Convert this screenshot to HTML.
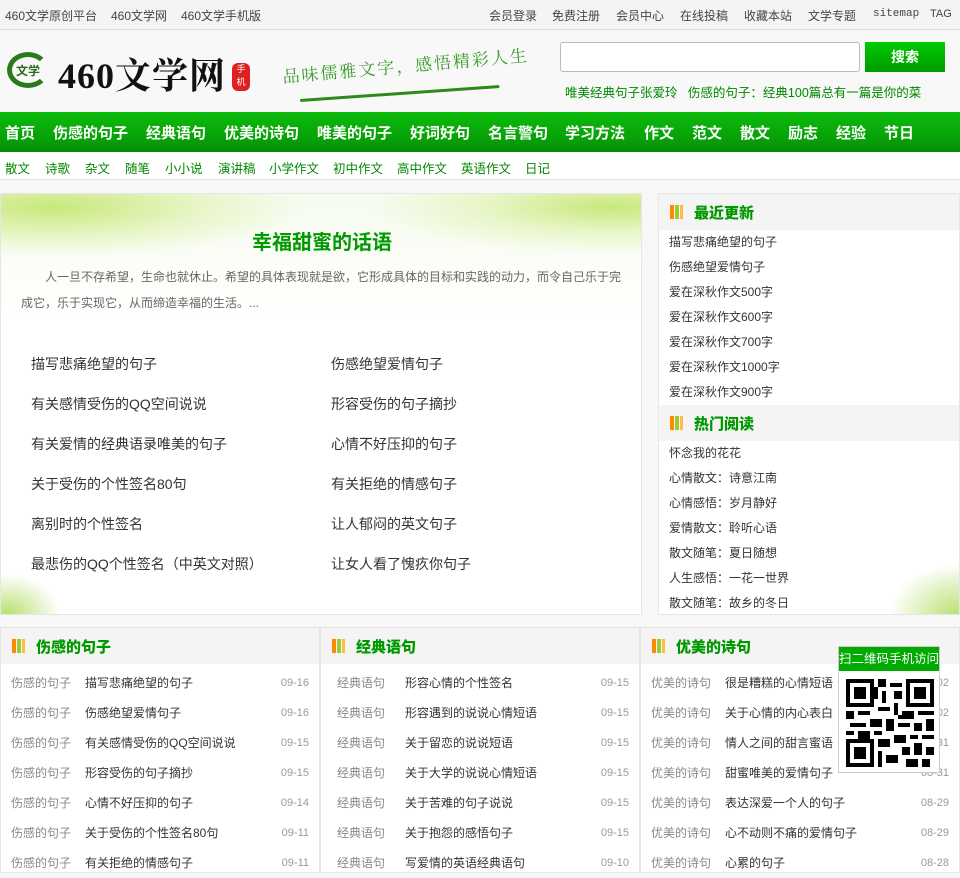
<!DOCTYPE html>
<html><head><meta charset="utf-8"><style>
*{margin:0;padding:0;box-sizing:border-box}
body{width:960px;height:873px;overflow:hidden;background:#f7f7f7;font-family:"Liberation Sans","Noto Sans CJK SC",sans-serif;font-size:12px;color:#333;position:relative}
a{text-decoration:none;color:inherit}
.top{height:30px;background:#f4f4f4;border-bottom:1px solid #ddd;position:relative;color:#444}
.top span{position:absolute;top:7px;font-size:12px}
.hdr{height:82px;background:#f8f8f8;position:relative}
.nav{height:40px;background:linear-gradient(#0bbb0b,#08a008 70%,#068a06);color:#fff;font-size:15px;font-weight:bold;position:relative}
.nav span{position:absolute;top:10px}
.sub{height:28px;background:#fff;border-bottom:1px solid #e3e3e3;position:relative;color:#080;font-size:12.5px}
.sub span{position:absolute;top:6px}
.main{position:absolute;left:0;top:193px;width:642px;height:422px;background:#fff;border:1px solid #e6e6e6;overflow:hidden}
.side{position:absolute;left:658px;top:193px;width:302px;height:422px;background:#fff;border:1px solid #e6e6e6}
.sh{height:36px;background:#f4f4f4;position:relative;color:#090;font-size:15px;font-weight:bold}
.sh b{position:absolute;left:35px;top:8px}
.ico{position:absolute;left:11px;top:11px;width:14px;height:14px;background:linear-gradient(90deg,#f80 0 4px,transparent 4px 5px,#9c3 5px 9px,transparent 9px 10px,#fb4 10px 13px,transparent 13px)}
.sl div{height:25px;line-height:25px;padding-left:10px;font-size:12px;color:#333}
.col{position:absolute;top:627px;width:320px;height:246px;background:#fff;border:1px solid #e6e6e6}
.col .row{height:30px;line-height:30px;position:relative;font-size:12px}
.col .c{position:absolute;left:10px;color:#888}
.col .t{position:absolute;left:84px;color:#333}
.col .d{position:absolute;right:10px;color:#999;font-size:11px}
.ml{position:absolute;font-size:14px;color:#333}
</style></head><body>
<div class="top">
<span style="left:5px">460文学原创平台</span><span style="left:111px">460文学网</span><span style="left:181px">460文学手机版</span>
<span style="left:489px">会员登录</span><span style="left:552px">免费注册</span><span style="left:616px">会员中心</span><span style="left:680px">在线投稿</span><span style="left:744px">收藏本站</span><span style="left:808px">文学专题</span><span style="left:873px;font-family:'Liberation Mono',monospace;font-size:11px;top:8px">sitemap</span><span style="left:930px;top:8px;font-size:11px">TAG</span>
</div>
<div class="hdr">
<div style="position:absolute;left:7px;top:22px;width:42px;height:36px;border:5px solid #2a7a1a;border-radius:50%;border-right-color:transparent"></div>
<div style="position:absolute;left:16px;top:32px;color:#2a6a1a;font-size:12px;font-weight:bold">文学</div>
<div style="position:absolute;left:58px;top:18px;font-size:36px;font-weight:bold;color:#111;font-family:'Liberation Serif','Noto Serif CJK SC',serif;letter-spacing:1px">460文学网</div>
<div style="position:absolute;left:232px;top:33px;width:18px;height:28px;background:#e02020;border-radius:6px;color:#fff;font-size:9px;text-align:center;line-height:13px">手<br>机</div>
<div style="position:absolute;left:282px;top:22px;color:#3a9a2a;font-size:17px;transform:rotate(-5deg);font-family:'Noto Serif CJK SC',serif;letter-spacing:2px">品味儒雅文字，感悟精彩人生</div>
<div style="position:absolute;left:300px;width:200px;height:3px;background:#2a8a1a;transform:rotate(-4deg);transform-origin:left;top:69px;border-radius:2px"></div>
<div style="position:absolute;left:560px;top:12px;width:300px;height:30px;background:#fff;border:1px solid #bbb;border-radius:3px"></div>
<div style="position:absolute;left:865px;top:12px;width:80px;height:30px;background:linear-gradient(#0c0,#090);color:#fff;font-weight:bold;font-size:14px;text-align:center;line-height:30px">搜索</div>
<div style="position:absolute;left:565px;top:52px;color:#080;font-size:12.5px">唯美经典句子张爱玲 &nbsp;&nbsp;伤感的句子：经典100篇总有一篇是你的菜</div>
</div>
<div class="nav">
<span style="left:5px">首页</span><span style="left:53px">伤感的句子</span><span style="left:146px">经典语句</span><span style="left:224px">优美的诗句</span><span style="left:317px">唯美的句子</span><span style="left:410px">好词好句</span><span style="left:488px">名言警句</span><span style="left:565px">学习方法</span><span style="left:644px">作文</span><span style="left:692px">范文</span><span style="left:740px">散文</span><span style="left:788px">励志</span><span style="left:836px">经验</span><span style="left:884px">节日</span>
</div>
<div class="sub">
<span style="left:5px">散文</span><span style="left:45px">诗歌</span><span style="left:85px">杂文</span><span style="left:125px">随笔</span><span style="left:165px">小小说</span><span style="left:218px">演讲稿</span><span style="left:269px">小学作文</span><span style="left:333px">初中作文</span><span style="left:397px">高中作文</span><span style="left:461px">英语作文</span><span style="left:525px">日记</span>
</div>
<div class="main">
<div style="position:absolute;left:0;top:0;width:642px;height:130px;background:radial-gradient(ellipse at 8% 10%,#c8e87a 0,#e8f6c8 18%,transparent 30%),radial-gradient(ellipse at 95% 10%,#c8e87a 0,#e8f6c8 15%,transparent 28%),linear-gradient(#f6fbee,#fff)"></div>
<div style="position:absolute;left:0;bottom:0;width:60px;height:40px;background:radial-gradient(ellipse at 10% 100%,#b8e070,transparent 70%)"></div>
<div style="position:absolute;left:0;top:32px;width:642px;text-align:center;color:#090;font-size:20px;font-weight:bold">幸福甜蜜的话语</div>
<div style="position:absolute;left:20px;top:70px;width:605px;color:#666;font-size:12px;line-height:26px;text-indent:24px">人一旦不存希望，生命也就休止。希望的具体表现就是欲，它形成具体的目标和实践的动力，而令自己乐于完成它，乐于实现它，从而缔造幸福的生活。...</div>
<div class="ml" style="left:30px;top:160px">描写悲痛绝望的句子</div><div class="ml" style="left:330px;top:160px">伤感绝望爱情句子</div>
<div class="ml" style="left:30px;top:200px">有关感情受伤的QQ空间说说</div><div class="ml" style="left:330px;top:200px">形容受伤的句子摘抄</div>
<div class="ml" style="left:30px;top:240px">有关爱情的经典语录唯美的句子</div><div class="ml" style="left:330px;top:240px">心情不好压抑的句子</div>
<div class="ml" style="left:30px;top:280px">关于受伤的个性签名80句</div><div class="ml" style="left:330px;top:280px">有关拒绝的情感句子</div>
<div class="ml" style="left:30px;top:320px">离别时的个性签名</div><div class="ml" style="left:330px;top:320px">让人郁闷的英文句子</div>
<div class="ml" style="left:30px;top:360px">最悲伤的QQ个性签名（中英文对照）</div><div class="ml" style="left:330px;top:360px">让女人看了愧疚你句子</div>
</div>
<div class="side">
<div class="sh"><i class="ico"></i><b>最近更新</b></div>
<div class="sl"><div>描写悲痛绝望的句子</div><div>伤感绝望爱情句子</div><div>爱在深秋作文500字</div><div>爱在深秋作文600字</div><div>爱在深秋作文700字</div><div>爱在深秋作文1000字</div><div>爱在深秋作文900字</div></div>
<div class="sh"><i class="ico"></i><b>热门阅读</b></div>
<div class="sl"><div>怀念我的花花</div><div>心情散文：诗意江南</div><div>心情感悟：岁月静好</div><div>爱情散文：聆听心语</div><div>散文随笔：夏日随想</div><div>人生感悟：一花一世界</div><div>散文随笔：故乡的冬日</div></div>
<div style="position:absolute;right:0;bottom:0;width:70px;height:50px;background:radial-gradient(ellipse at 100% 100%,#b8e070,transparent 70%)"></div>
</div>
<div class="col" style="left:0">
<div class="sh"><i class="ico"></i><b>伤感的句子</b></div>
<div style="height:4px"></div>
<div class="row"><span class="c">伤感的句子</span><span class="t">描写悲痛绝望的句子</span><span class="d">09-16</span></div>
<div class="row"><span class="c">伤感的句子</span><span class="t">伤感绝望爱情句子</span><span class="d">09-16</span></div>
<div class="row"><span class="c">伤感的句子</span><span class="t">有关感情受伤的QQ空间说说</span><span class="d">09-15</span></div>
<div class="row"><span class="c">伤感的句子</span><span class="t">形容受伤的句子摘抄</span><span class="d">09-15</span></div>
<div class="row"><span class="c">伤感的句子</span><span class="t">心情不好压抑的句子</span><span class="d">09-14</span></div>
<div class="row"><span class="c">伤感的句子</span><span class="t">关于受伤的个性签名80句</span><span class="d">09-11</span></div>
<div class="row"><span class="c">伤感的句子</span><span class="t">有关拒绝的情感句子</span><span class="d">09-11</span></div>
</div>
<div class="col" style="left:320px">
<div class="sh"><i class="ico"></i><b>经典语句</b></div>
<div style="height:4px"></div>
<div class="row"><span class="c" style="left:16px">经典语句</span><span class="t">形容心情的个性签名</span><span class="d">09-15</span></div>
<div class="row"><span class="c" style="left:16px">经典语句</span><span class="t">形容遇到的说说心情短语</span><span class="d">09-15</span></div>
<div class="row"><span class="c" style="left:16px">经典语句</span><span class="t">关于留恋的说说短语</span><span class="d">09-15</span></div>
<div class="row"><span class="c" style="left:16px">经典语句</span><span class="t">关于大学的说说心情短语</span><span class="d">09-15</span></div>
<div class="row"><span class="c" style="left:16px">经典语句</span><span class="t">关于苦难的句子说说</span><span class="d">09-15</span></div>
<div class="row"><span class="c" style="left:16px">经典语句</span><span class="t">关于抱怨的感悟句子</span><span class="d">09-15</span></div>
<div class="row"><span class="c" style="left:16px">经典语句</span><span class="t">写爱情的英语经典语句</span><span class="d">09-10</span></div>
</div>
<div class="col" style="left:640px">
<div class="sh"><i class="ico"></i><b>优美的诗句</b></div>
<div style="height:4px"></div>
<div class="row"><span class="c">优美的诗句</span><span class="t">很是糟糕的心情短语</span><span class="d">09-02</span></div>
<div class="row"><span class="c">优美的诗句</span><span class="t">关于心情的内心表白</span><span class="d">09-02</span></div>
<div class="row"><span class="c">优美的诗句</span><span class="t">情人之间的甜言蜜语</span><span class="d">08-31</span></div>
<div class="row"><span class="c">优美的诗句</span><span class="t">甜蜜唯美的爱情句子</span><span class="d">08-31</span></div>
<div class="row"><span class="c">优美的诗句</span><span class="t">表达深爱一个人的句子</span><span class="d">08-29</span></div>
<div class="row"><span class="c">优美的诗句</span><span class="t">心不动则不痛的爱情句子</span><span class="d">08-29</span></div>
<div class="row"><span class="c">优美的诗句</span><span class="t">心累的句子</span><span class="d">08-28</span></div>
</div>
<div style="position:absolute;left:838px;top:646px;width:102px;height:127px;background:#fff;border:1px solid #ccc">
<div style="height:24px;background:#0a0;color:#fff;font-size:12.5px;line-height:24px;text-align:center">扫二维码手机访问</div>
<svg width="88" height="90" style="position:absolute;left:7px;top:31px" viewBox="0 0 22 22" shape-rendering="crispEdges">
<rect width="22" height="22" fill="#fff"/>
<g fill="none" stroke="#000"><rect x="0.5" y="0.5" width="6" height="6"/><rect x="15.5" y="0.5" width="6" height="6"/><rect x="0.5" y="15.5" width="6" height="6"/></g>
<g fill="#000"><rect x="2" y="2" width="3" height="3"/><rect x="17" y="2" width="3" height="3"/><rect x="2" y="17" width="3" height="3"/>
<path d="M8 0h2v2h-2zM11 1h3v1h-3zM9 3h1v3h-1zM12 3h2v2h-2zM8 7h3v1h-3zM12 6h1v3h-1zM0 8h2v2h-2zM3 8h3v1h-3zM14 8h3v2h-3zM18 8h4v1h-4zM1 11h4v1h-4zM6 10h3v2h-3zM10 10h2v3h-2zM13 11h3v1h-3zM17 11h2v2h-2zM20 10h2v3h-2zM0 13h2v1h-2zM3 13h3v2h-3zM7 13h2v1h-2zM12 14h3v2h-3zM16 14h2v1h-2zM19 14h3v1h-3zM8 15h3v2h-3zM14 17h2v2h-2zM17 16h2v3h-2zM20 17h2v2h-2zM8 18h1v4h-1zM10 19h3v2h-3zM15 20h3v2h-3zM19 20h2v2h-2zM13 9h1v1h-1zM7 2h1v3h-1z"/></g>
</svg>
</div>
</body></html>
